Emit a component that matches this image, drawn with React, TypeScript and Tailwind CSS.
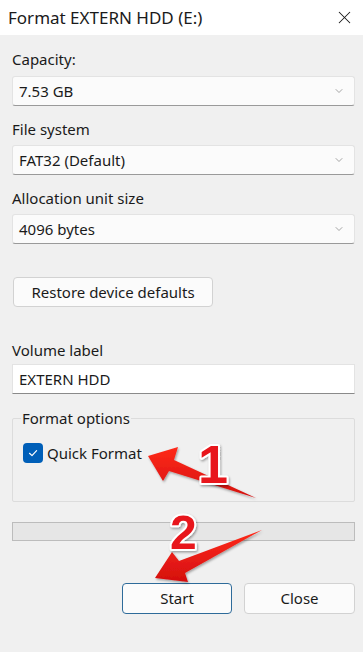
import { ChevronDown, X } from 'lucide-react';

const FONT = "font-['Noto_Sans',_'Open_Sans',_sans-serif]";

function Select({ value }: { value: string }) {
  return (
    <div className="h-[30px] flex items-center justify-between bg-[#fbfbfb] border border-[#e3e3e3] border-b-[#9a9a9a] rounded-[3px] pl-[6px] pr-[9px]">
      <span className="text-[15px] text-[#1a1a1a]">{value}</span>
      <ChevronDown className="w-[12px] h-[12px] text-[#808080]" strokeWidth={1.4} />
    </div>
  );
}

function Arrows() {
  return (
    <svg className="absolute inset-0 pointer-events-none" width="363" height="652" viewBox="0 0 363 652">
      <defs>
        <linearGradient id="red" x1="0" y1="0" x2="0" y2="1">
          <stop offset="0" stopColor="#ff2a1a" />
          <stop offset="1" stopColor="#d40f0f" />
        </linearGradient>
        <filter id="sh" x="-20%" y="-20%" width="140%" height="140%">
          <feDropShadow dx="1" dy="1.5" stdDeviation="1.2" floodColor="#000" floodOpacity="0.35" />
        </filter>
      </defs>
      {/* arrow 1 */}
      <polygon points="148,456 178,447 174,460 256,498 169,471 163,481" fill="url(#red)" filter="url(#sh)" />
      <text x="198" y="483" fontFamily="Liberation Sans, Arial, sans-serif" fontWeight="bold" fontSize="54"
        fill="#e8161a" stroke="#fff" strokeWidth="4" paintOrder="stroke" strokeLinejoin="round" filter="url(#sh)">1</text>
      {/* arrow 2 */}
      <polygon points="155,578 172,552 179,561 262,530 185,573 188,582" fill="url(#red)" filter="url(#sh)" />
      <text x="170" y="549" fontFamily="Liberation Sans, Arial, sans-serif" fontWeight="bold" fontSize="48"
        fill="#e8161a" stroke="#fff" strokeWidth="4" paintOrder="stroke" strokeLinejoin="round" filter="url(#sh)">2</text>
    </svg>
  );
}

export default function App() {
  return (
    <div className={`relative w-[363px] h-[652px] bg-[#f0f0f0] overflow-hidden text-[#1a1a1a] ${FONT}`}>
      {/* Title bar */}
      <div className="h-[35px] bg-white flex items-center justify-between pl-[8px] pr-[8px]">
        <span className="text-[17px]">Format EXTERN HDD (E:)</span>
        <X className="w-[21px] h-[21px] text-[#1a1a1a]" strokeWidth={1.2} />
      </div>

      <div className="pl-[12px] pr-[8px] flex flex-col">
        <div className="mt-[12px] h-[24px] flex items-center text-[15px]">Capacity:</div>
        <div className="mt-[5px]"><Select value="7.53 GB" /></div>

        <div className="mt-[11px] h-[24px] flex items-center text-[15px]">File system</div>
        <div className="mt-[4px]"><Select value="FAT32 (Default)" /></div>

        <div className="mt-[11px] h-[24px] flex items-center text-[15px]">Allocation unit size</div>
        <div className="mt-[4px]"><Select value="4096 bytes" /></div>

        <button className="mt-[33px] ml-[1px] w-[200px] h-[30px] bg-[#fbfbfb] border border-[#d2d2d2] rounded-[4px] text-[15px]">
          Restore device defaults
        </button>

        <div className="mt-[31px] h-[24px] flex items-center text-[15px]">Volume label</div>
        <div className="mt-[2px] h-[30px] flex items-center bg-white border border-[#e3e3e3] border-b-[#8a8a8a] pl-[6px] text-[15px]">
          EXTERN HDD
        </div>

        {/* Format options group */}
        <div className="relative mt-[24px] h-[84px] border border-[#dcdcdc] rounded-[2px]">
          <span className="absolute -top-[11px] left-[8px] px-[1px] bg-[#f0f0f0] text-[15px] leading-[20px]">Format options</span>
          <div className="mt-[23px] ml-[10px] flex items-center gap-[4px]">
            <div className="w-[20px] h-[20px] rounded-[4px] bg-[#005fb8] flex items-center justify-center">
              <svg width="12" height="12" viewBox="0 0 12 12" fill="none" stroke="#fff" strokeWidth="1.2" strokeLinecap="round" strokeLinejoin="round">
                <path d="M2.5 6.3 L5 8.6 L9.6 3.6" />
              </svg>
            </div>
            <span className="text-[15px]">Quick Format</span>
          </div>
        </div>

        {/* Progress bar */}
        <div className="mt-[20px] h-[19px] bg-[#e6e6e6] border border-[#bcbcbc]" />

        <div className="mt-[42px] flex justify-end gap-[12px]">
          <button className="w-[110px] h-[31px] bg-[#fbfbfb] border border-[#2e6b9a] rounded-[4px] text-[15px]">Start</button>
          <button className="w-[111px] h-[31px] bg-[#fbfbfb] border border-[#d2d2d2] rounded-[4px] text-[15px]">Close</button>
        </div>
      </div>

      <Arrows />
    </div>
  );
}
